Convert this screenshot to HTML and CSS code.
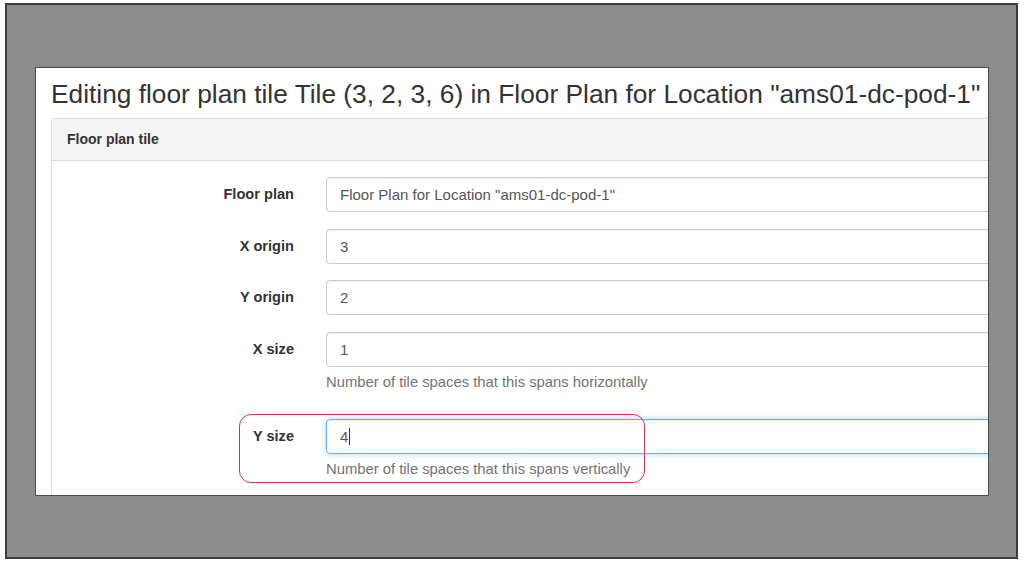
FILE: index.html
```html
<!DOCTYPE html>
<html>
<head>
<meta charset="utf-8">
<link rel="stylesheet" href="styles.css">
</head>
<body>
<div class="frame">
  <div class="shot">
    <h1 class="title">Editing floor plan tile Tile (3, 2, 3, 6) in Floor Plan for Location "ams01-dc-pod-1"</h1>
    <div class="panel">
      <div class="panel-heading">Floor plan tile</div>
      <div class="panel-body">
        <div class="row">
          <div class="label">Floor plan</div>
          <div class="field"><div class="input">Floor Plan for Location "ams01-dc-pod-1"</div></div>
        </div>
        <div class="row">
          <div class="label">X origin</div>
          <div class="field"><div class="input">3</div></div>
        </div>
        <div class="row">
          <div class="label">Y origin</div>
          <div class="field"><div class="input">2</div></div>
        </div>
        <div class="row">
          <div class="label">X size</div>
          <div class="field"><div class="input">1</div><div class="help">Number of tile spaces that this spans horizontally</div></div>
        </div>
        <div class="row row-last">
          <div class="label">Y size</div>
          <div class="field"><div class="input focus">4<span class="caret"></span></div><div class="help">Number of tile spaces that this spans vertically</div></div>
        </div>
      </div>
    </div>
  </div>
  <div class="highlight"></div>
</div>
</body>
</html>
```
FILE: styles.css
```css
html, body {
  margin: 0;
  padding: 0;
  background: #ffffff;
  font-family: "Liberation Sans", Arial, sans-serif;
}
.frame {
  position: relative;
  margin: 3px 0 0 5px;
  background: #8c8c8c;
  border: 2px solid #3c3c3c;
  padding: 62px 0 0 28px;
  box-sizing: border-box;
  width: 1013px;
  height: 556px;
}
.shot {
  width: 954px;
  height: 429px;
  background: #ffffff;
  border: 1px solid #4a4a4a;
  box-sizing: border-box;
  overflow: hidden;
  padding: 0 0 0 15px;
}
.title {
  margin: 11px 0 0 0;
  font-size: 26.3px;
  font-weight: normal;
  color: #333333;
  line-height: 30px;
  white-space: nowrap;
}
.panel {
  margin-top: 9px;
  width: 1000px;
  border: 1px solid #dddddd;
  border-radius: 3px;
}
.panel-heading {
  height: 41px;
  background: #f5f5f5;
  border-bottom: 1px solid #dddddd;
  font-size: 14px;
  font-weight: bold;
  color: #333333;
  line-height: 41px;
  padding-left: 15px;
}
.panel-body {
  padding: 16px 0 40px 0;
}
.row {
  display: flex;
  gap: 32px;
  margin-bottom: 16.67px;
}
.row-last {
  margin-top: 27px;
}
.label {
  width: 242px;
  flex: none;
  text-align: right;
  font-size: 14.6px;
  font-weight: bold;
  color: #333333;
  line-height: 35px;
}
.field {
  flex: 1;
}
.input {
  height: 35px;
  box-sizing: border-box;
  border: 1px solid #cccccc;
  border-radius: 4px;
  padding: 0 13px;
  font-size: 15px;
  line-height: 33px;
  color: #555555;
  box-shadow: inset 0 1px 1px rgba(0,0,0,0.06);
}
.input.focus {
  border-color: #66afe9;
  box-shadow: inset 0 1px 1px rgba(0,0,0,0.06), 0 0 6px rgba(102,175,233,0.5);
}
.caret {
  display: inline-block;
  width: 1px;
  height: 17px;
  background: #333333;
  vertical-align: -3px;
  margin-left: 1px;
}
.help {
  margin-top: 5px;
  font-size: 14.8px;
  line-height: 20px;
  color: #737373;
}
.highlight {
  position: absolute;
  left: 232px;
  top: 409px;
  width: 406px;
  height: 69px;
  box-sizing: border-box;
  border: 1.5px solid #e0334a;
  border-radius: 12px;
}
```
